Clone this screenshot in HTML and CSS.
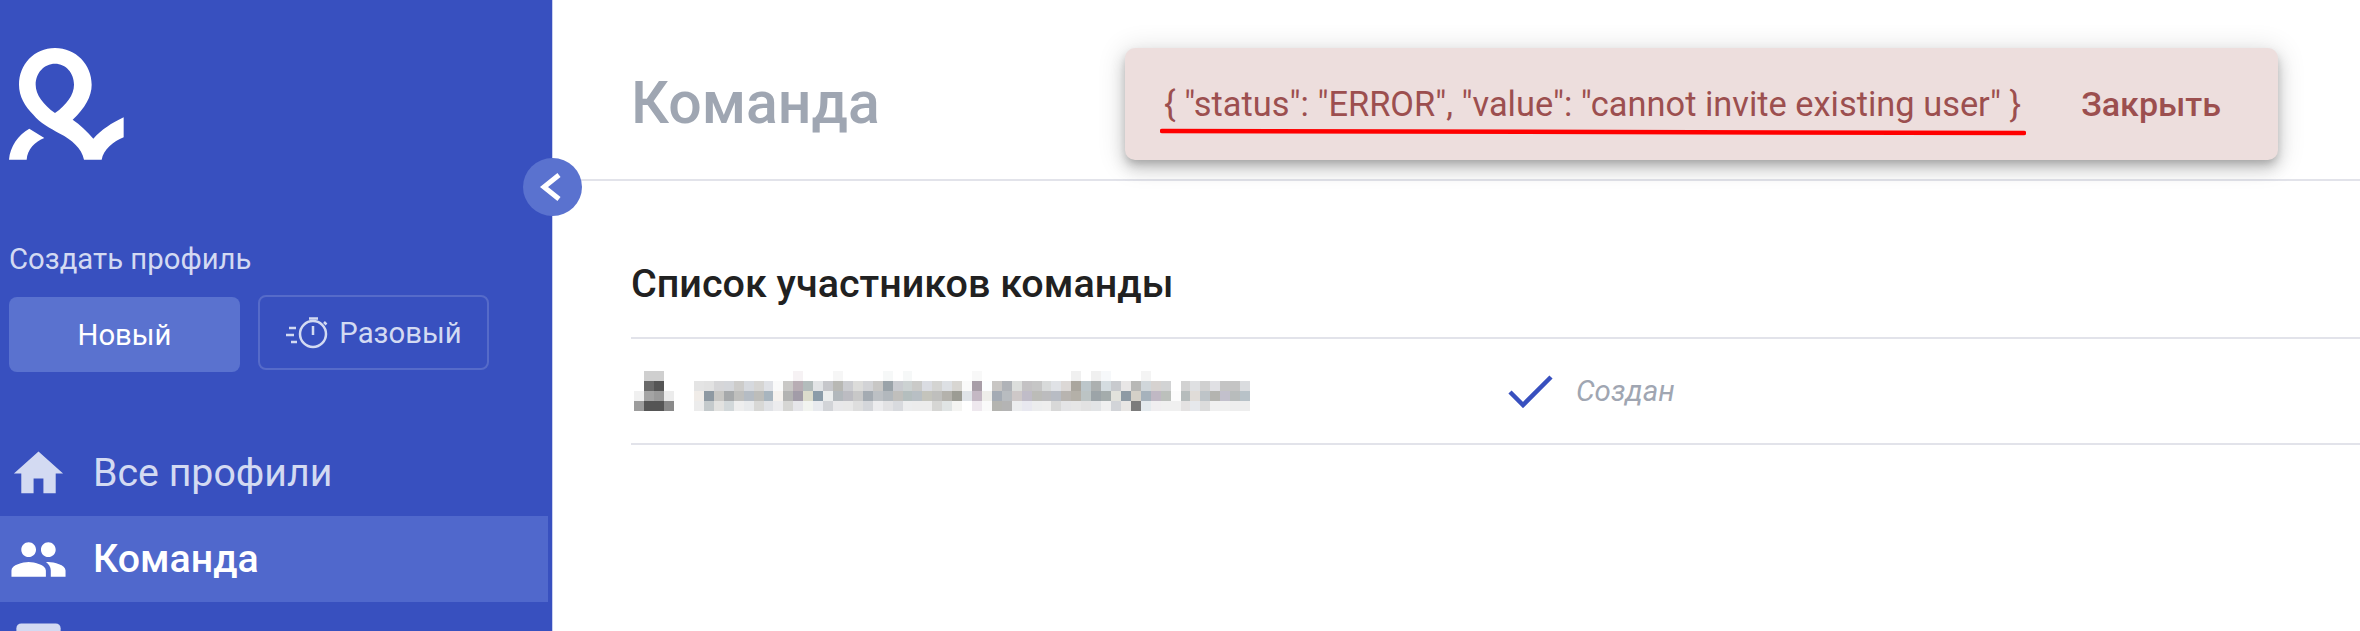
FILE: index.html
```html
<!DOCTYPE html>
<html lang="ru">

<head>
    <meta charset="utf-8" />
    <title>Команда</title>
    <link rel="stylesheet" href="styles.css">
</head>

<body>
    <aside class="sidebar">
        <svg class="logo" viewBox="27 25 345 336">
            <path fill-rule="evenodd" d="M165 25C228 25 275 75 275 135C275 170 255 205 218 240C240 255 262 275 280 297C305 270 335 250 371 233L371 293C340 305 310 330 305 360L252 360C245 325 215 300 180 282C150 265 120 250 100 225C75 200 57 170 57 135C57 75 102 25 165 25ZM165 72C132 72 107 100 107 135C107 165 130 195 165 220C200 195 222 165 222 135C222 100 198 72 165 72Z" />
            <path d="M88 267L133 295C105 305 82 330 80 360L27 360C30 320 55 285 88 267Z" />
        </svg>
        <div class="create-label">Создать профиль</div>
        <div class="create-btns">
            <a class="btn btn-new">Новый</a>
            <a class="btn btn-once">
                <svg class="timer" viewBox="0 0 43 35">
                    <circle cx="28" cy="19" r="13" />
                    <path d="M24 3.500h9M28 11v9M39 7l2.500 2.500M4 13h7M1 20h8M6 27h6" />
                </svg>
                Разовый
            </a>
        </div>
        <nav class="menu">
            <a class="menu-item">
                <svg viewBox="0 0 24 24"><path d="M10 20v-6h4v6h5v-8h3L12 3 2 12h3v8z" /></svg>
                Все профили
            </a>
            <a class="menu-item active">
                <svg viewBox="0 0 24 24"><path d="M16 11c1.660 0 2.990-1.340 2.990-3S17.660 5 16 5c-1.660 0-3 1.340-3 3s1.340 3 3 3zm-8 0c1.660 0 2.990-1.340 2.990-3S9.660 5 8 5C6.340 5 5 6.340 5 8s1.340 3 3 3zm0 2c-2.330 0-7 1.170-7 3.500V19h14v-2.500c0-2.330-4.670-3.500-7-3.500zm8 0c-.290 0-.620.020-.970.050 1.160.840 1.970 1.970 1.970 3.450V19h6v-2.500c0-2.330-4.670-3.500-7-3.500z" /></svg>
                Команда
            </a>
            <a class="menu-item cut">
                <svg viewBox="0 0 24 24"><rect x="3" y="3" width="18" height="18" rx="2" /></svg>
            </a>
        </nav>
    </aside>
    <button class="collapse">
        <svg viewBox="0 0 58 58"><path d="M36 17L21 29L36 41" /></svg>
    </button>

    <main class="content">
        <header class="page-head">
            <h1>Команда</h1>
        </header>
        <section class="members">
            <h2>Список участников команды</h2>
            <div class="member">
                <svg class="blur avatar" viewBox="0 0 4 4" shape-rendering="crispEdges">
                    <g class="r0"><rect x="1" fill="#cfcfcf" /><rect x="2" fill="#cfcfcf" /></g>
                    <g class="r1"><rect x="1" fill="#6a6a6a" /><rect x="2" fill="#555555" /></g>
                    <g class="r2"><rect x="0" fill="#f0f0f0" /><rect x="1" fill="#a4a4a4" /><rect x="2" fill="#9a9a9a" /><rect x="3" fill="#ececec" /></g>
                    <g class="r3"><rect x="0" fill="#9c9c9c" /><rect x="1" fill="#555555" /><rect x="2" fill="#555555" /><rect x="3" fill="#8a8a8a" /></g>
                </svg>
                <svg class="blur email" viewBox="0 0 56 4" shape-rendering="crispEdges">
                    <g class="r0"><rect x="10" fill="#f6f2f4" /><rect x="14" fill="#f6f6f6" /><rect x="19" fill="#f6f8f8" /><rect x="21" fill="#f6f8f8" /><rect x="28" fill="#f8f8f8" /><rect x="38" fill="#f0f0f0" /><rect x="40" fill="#f0f0f0" /><rect x="41" fill="#f6f8fa" /><rect x="45" fill="#f4f4f4" /></g>
                    <g class="r1"><rect x="0" fill="#e4e4e4" /><rect x="1" fill="#e2e2e2" /><rect x="2" fill="#d6d6d8" /><rect x="3" fill="#d4d6da" /><rect x="4" fill="#cdccca" /><rect x="5" fill="#d6d9de" /><rect x="6" fill="#d6d5d3" /><rect x="7" fill="#dfe1e6" /><rect x="8" fill="#fafafa" /><rect x="9" fill="#c9c8c6" /><rect x="10" fill="#b8adb4" /><rect x="11" fill="#b3bcbc" /><rect x="12" fill="#e2e4e6" /><rect x="13" fill="#c6c7cb" /><rect x="14" fill="#b8b8b4" /><rect x="15" fill="#cbccd0" /><rect x="16" fill="#dcdcda" /><rect x="17" fill="#d2d3d6" /><rect x="18" fill="#c8c7c5" /><rect x="19" fill="#9aa3a9" /><rect x="20" fill="#c9cbd0" /><rect x="21" fill="#ccd2d2" /><rect x="22" fill="#cacac8" /><rect x="23" fill="#dadce2" /><rect x="24" fill="#d4d4d2" /><rect x="25" fill="#dde0e4" /><rect x="26" fill="#d8d6d2" /><rect x="27" fill="#fafafa" /><rect x="28" fill="#a89ea8" /><rect x="29" fill="#fcfeff" /><rect x="30" fill="#c8c6c4" /><rect x="31" fill="#b0b3b8" /><rect x="32" fill="#dcdedc" /><rect x="33" fill="#c4c2c4" /><rect x="34" fill="#c6c6c6" /><rect x="35" fill="#d8dada" /><rect x="36" fill="#e0e2e6" /><rect x="37" fill="#dcd8d6" /><rect x="38" fill="#aaa69e" /><rect x="39" fill="#bcc6ca" /><rect x="40" fill="#acb0b0" /><rect x="41" fill="#d4dce0" /><rect x="42" fill="#c8cace" /><rect x="43" fill="#e8e6e6" /><rect x="44" fill="#b8b8b6" /><rect x="45" fill="#d0d6da" /><rect x="46" fill="#d6d2d0" /><rect x="47" fill="#d2d3d4" /><rect x="49" fill="#d2d2d2" /><rect x="50" fill="#dfe0e2" /><rect x="51" fill="#d0d0d0" /><rect x="52" fill="#e0e0e4" /><rect x="53" fill="#c4c4c4" /><rect x="54" fill="#c4c4c4" /><rect x="55" fill="#dadcdf" /></g>
                    <g class="r2"><rect x="0" fill="#f0ece8" /><rect x="1" fill="#8e99a2" /><rect x="2" fill="#c8c7c4" /><rect x="3" fill="#a6a9ab" /><rect x="4" fill="#bfbfbd" /><rect x="5" fill="#b5bcc4" /><rect x="6" fill="#bdbdba" /><rect x="7" fill="#a8b5bf" /><rect x="8" fill="#f6f2ee" /><rect x="9" fill="#b3b3b2" /><rect x="10" fill="#a29ca8" /><rect x="11" fill="#dcdccc" /><rect x="12" fill="#8b9ca9" /><rect x="13" fill="#eceeee" /><rect x="14" fill="#b2b8bc" /><rect x="15" fill="#bcbcc2" /><rect x="16" fill="#c8c8c8" /><rect x="17" fill="#a4abb2" /><rect x="18" fill="#bcc0c4" /><rect x="19" fill="#b2b8bd" /><rect x="20" fill="#c0bfbc" /><rect x="21" fill="#b4bebe" /><rect x="22" fill="#b8bfc4" /><rect x="23" fill="#c4c4bc" /><rect x="24" fill="#bfbfbd" /><rect x="25" fill="#b4b2ac" /><rect x="26" fill="#9c9c94" /><rect x="27" fill="#dfe3e8" /><rect x="28" fill="#c4b8c4" /><rect x="29" fill="#eeeeea" /><rect x="30" fill="#a4abb4" /><rect x="31" fill="#b8bcc0" /><rect x="32" fill="#cec8c8" /><rect x="33" fill="#c0bcc8" /><rect x="34" fill="#bcbcb8" /><rect x="35" fill="#bcbcbe" /><rect x="36" fill="#b8bcc4" /><rect x="37" fill="#b8b4b0" /><rect x="38" fill="#b4b0a8" /><rect x="39" fill="#bcc4c4" /><rect x="40" fill="#9ca4a8" /><rect x="41" fill="#a4acac" /><rect x="42" fill="#e2e2dc" /><rect x="43" fill="#8e9aa4" /><rect x="44" fill="#d4d0c8" /><rect x="45" fill="#a6b2bc" /><rect x="46" fill="#c0b8c4" /><rect x="47" fill="#bcc0bc" /><rect x="48" fill="#fcfcfc" /><rect x="49" fill="#b6bcbc" /><rect x="50" fill="#e0dcd8" /><rect x="51" fill="#bec4c8" /><rect x="52" fill="#b4b4b0" /><rect x="53" fill="#c2c0cc" /><rect x="54" fill="#b8bcbc" /><rect x="55" fill="#b8c2c8" /></g>
                    <g class="r3"><rect x="0" fill="#ececec" /><rect x="1" fill="#c4cacc" /><rect x="2" fill="#e2e2e0" /><rect x="3" fill="#d2d8da" /><rect x="4" fill="#eeeeee" /><rect x="5" fill="#e8eaec" /><rect x="6" fill="#d8d8d6" /><rect x="7" fill="#e0e2e6" /><rect x="8" fill="#ececee" /><rect x="9" fill="#d6d6d4" /><rect x="10" fill="#e6e6ea" /><rect x="11" fill="#f2f4f0" /><rect x="12" fill="#e8eaee" /><rect x="13" fill="#d2d4d8" /><rect x="14" fill="#e8e8ea" /><rect x="15" fill="#e8e8e8" /><rect x="16" fill="#dedede" /><rect x="17" fill="#d4d6da" /><rect x="18" fill="#ececee" /><rect x="19" fill="#e2e2e4" /><rect x="20" fill="#d8dade" /><rect x="21" fill="#ecedee" /><rect x="22" fill="#ececec" /><rect x="23" fill="#ececec" /><rect x="24" fill="#d6d6d4" /><rect x="25" fill="#e0e4e4" /><rect x="26" fill="#f4f4f2" /><rect x="28" fill="#eee8ee" /><rect x="29" fill="#fafafa" /><rect x="30" fill="#b4b4b0" /><rect x="31" fill="#b4b4b4" /><rect x="32" fill="#ecedef" /><rect x="33" fill="#e8e8f0" /><rect x="34" fill="#ecedee" /><rect x="35" fill="#eeeeee" /><rect x="36" fill="#d8d8d8" /><rect x="37" fill="#e4e4e6" /><rect x="38" fill="#e6e6e6" /><rect x="39" fill="#e2e2e2" /><rect x="40" fill="#e2e4e6" /><rect x="41" fill="#f0f0f0" /><rect x="42" fill="#d2d4d8" /><rect x="43" fill="#e8e6e4" /><rect x="44" fill="#7c7c7c" /><rect x="45" fill="#e4eaee" /><rect x="46" fill="#f0eef0" /><rect x="47" fill="#f0f0f0" /><rect x="48" fill="#f0f0f0" /><rect x="49" fill="#e4e2e2" /><rect x="50" fill="#e6e8ec" /><rect x="51" fill="#dcdcdc" /><rect x="52" fill="#f0f0f0" /><rect x="53" fill="#f0f0f0" /><rect x="54" fill="#eeeeee" /><rect x="55" fill="#eeeeee" /></g>
                </svg>
                <svg class="check" viewBox="0 0 45 33"><path d="M2 17L15 30L43 2" /></svg>
                <span class="status">Создан</span>
            </div>
        </section>
    </main>

    <div class="snackbar">
        <span class="snackbar-text">{ "status": "ERROR", "value": "cannot invite existing user" }</span>
        <span class="snackbar-close">Закрыть</span>
        <svg class="scribble" viewBox="0 0 866 8"><path d="M2 3L864 5" /></svg>
    </div>
</body>

</html>
```

FILE: styles.css
```css
html,
body {
    height: 631px;
    margin: 0;
    overflow: hidden;
}

body {
    position: relative;
    display: flex;
    background-color: #fff;
    font-family: Roboto, "Noto Sans", sans-serif;
}

/* sidebar */
.sidebar {
    flex: 0 0 553px;
    box-sizing: border-box;
    padding-top: 48px;
    background-color: #3850bf;
    border-right: 1px solid #c9d0f0;
    color: #d3daf2;
}

.logo {
    display: block;
    width: 115px;
    height: 112px;
    margin-left: 9px;
    fill: #fff;
}

.create-label {
    margin: 83px 0 0 9px;
    font-size: 29.300px;
    line-height: 32px;
}

.create-btns {
    display: flex;
    align-items: flex-start;
    gap: 18px;
    margin: 20px 0 0 9px;
    font-size: 29.300px;
}

.btn {
    display: flex;
    align-items: center;
    justify-content: center;
    box-sizing: border-box;
    width: 231px;
    height: 75px;
    border-radius: 8px;
}

.btn-new {
    margin-top: 2px;
    background-color: #5a72cf;
    color: #fff;
}

.btn-once {
    gap: 11px;
    border: 2px solid #566bc9;
}

.timer {
    width: 43px;
    height: 35px;
    fill: none;
    stroke: #d3daf2;
    stroke-width: 2.500;
}

.menu {
    margin-top: 58px;
}

.menu-item {
    display: flex;
    align-items: center;
    gap: 25px;
    width: 548px;
    height: 86px;
    padding-left: 9px;
    box-sizing: border-box;
    font-size: 39.300px;
}

.menu-item svg {
    flex: none;
    width: 59px;
    height: 59px;
    fill: #d3daf2;
}

.menu-item.active {
    background-color: #5068cc;
    color: #fff;
    font-weight: 500;
}

.menu-item.active svg {
    fill: #fff;
}

.menu-item.cut {
    align-items: flex-start;
    height: 29px;
    padding-top: 14px;
    overflow: hidden;
}

.collapse {
    position: absolute;
    left: 523px;
    top: 158px;
    width: 59px;
    height: 58px;
    padding: 0;
    border: none;
    border-radius: 50%;
    background-color: #5a72cf;
}

.collapse svg {
    display: block;
    width: 58px;
    height: 58px;
    fill: none;
    stroke: #fff;
    stroke-width: 5;
}

/* content */
.content {
    flex: 1;
    min-width: 0;
}

.page-head {
    display: flex;
    align-items: center;
    box-sizing: border-box;
    height: 181px;
    padding: 26px 0 0 78px;
    border-bottom: 2px solid #e2e3ea;
}

.page-head h1 {
    margin: 0;
    font-size: 59px;
    font-weight: 500;
    color: #9fa6b2;
}

.members {
    margin-left: 78px;
}

.members h2 {
    display: flex;
    align-items: center;
    box-sizing: border-box;
    height: 158px;
    margin: 0;
    padding-top: 48px;
    border-bottom: 2px solid #e2e3ea;
    font-size: 39.500px;
    font-weight: 500;
    color: #212121;
}

.member {
    display: flex;
    align-items: center;
    box-sizing: border-box;
    height: 106px;
    border-bottom: 2px solid #e2e3ea;
}

.blur {
    flex: none;
    height: 40px;
    filter: blur(0.7px);
}

.blur rect {
    width: 1px;
    height: 1px;
}

.r1 {
    transform: translateY(1px);
}

.r2 {
    transform: translateY(2px);
}

.r3 {
    transform: translateY(3px);
}

.avatar {
    width: 40px;
    margin-left: 3px;
}

.email {
    width: 556px;
    margin-left: 20px;
}

.check {
    flex: none;
    width: 45px;
    height: 33px;
    margin-left: 258px;
    fill: none;
    stroke: #3850bf;
    stroke-width: 4.500;
}

.status {
    margin-left: 23px;
    font-size: 29.500px;
    font-style: italic;
    color: #a0a6b2;
}

/* snackbar */
.snackbar {
    position: absolute;
    left: 1125px;
    top: 48px;
    display: flex;
    align-items: center;
    box-sizing: border-box;
    width: 1153px;
    height: 112px;
    padding: 0 57px 0 39px;
    border-radius: 10px;
    background-color: #eddedd;
    box-shadow: 0 5px 8px -2px rgba(0, 0, 0, 0.2), 0 9px 15px 1px rgba(0, 0, 0, 0.14), 0 3px 27px 3px rgba(0, 0, 0, 0.12);
    color: #9c4f4f;
}

.snackbar-text {
    flex: 1;
    font-size: 34.400px;
}

.snackbar-close {
    font-size: 34px;
    font-weight: 500;
}

.scribble {
    position: absolute;
    left: 35px;
    top: 80px;
    width: 866px;
    height: 8px;
    fill: none;
    stroke: #f00;
    stroke-width: 4.500;
    stroke-linecap: round;
}
```
